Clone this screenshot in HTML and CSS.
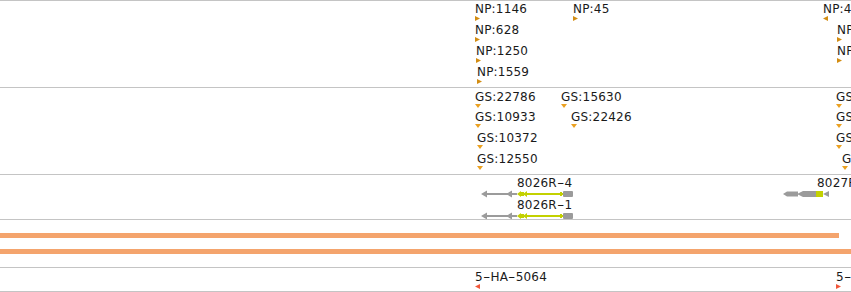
FILE: index.html
```html
<!DOCTYPE html>
<html lang="en">
<head>
    <meta charset="UTF-8">
    <title>Tracks</title>
    <link rel="stylesheet" href="styles.css">
</head>
<body>
    <!-- NP track -->
    <div class="track track-tall">
        <div class="feat np" style="left:475px;top:1px"><span class="label">NP:1146</span><i class="tri tri-right"></i></div>
        <div class="feat np" style="left:475px;top:22px"><span class="label">NP:628</span><i class="tri tri-right"></i></div>
        <div class="feat np" style="left:476px;top:43px"><span class="label">NP:1250</span><i class="tri tri-right"></i></div>
        <div class="feat np" style="left:477px;top:64px"><span class="label">NP:1559</span><i class="tri tri-right"></i></div>
        <div class="feat np" style="left:573px;top:1px"><span class="label">NP:45</span><i class="tri tri-right"></i></div>
        <div class="feat np" style="left:823px;top:1px"><span class="label">NP:47</span><i class="tri tri-left"></i></div>
        <div class="feat np" style="left:837px;top:22px"><span class="label">NP:88</span><i class="tri tri-right"></i></div>
        <div class="feat np" style="left:837px;top:43px"><span class="label">NP:91</span><i class="tri tri-right"></i></div>
    </div>

    <!-- GS track -->
    <div class="track track-tall">
        <div class="feat gs" style="left:475px;top:2px"><span class="label">GS:22786</span><i class="tri tri-down"></i></div>
        <div class="feat gs" style="left:475px;top:22px"><span class="label">GS:10933</span><i class="tri tri-down"></i></div>
        <div class="feat gs" style="left:477px;top:43px"><span class="label">GS:10372</span><i class="tri tri-down"></i></div>
        <div class="feat gs" style="left:477px;top:64px"><span class="label">GS:12550</span><i class="tri tri-down"></i></div>
        <div class="feat gs" style="left:561px;top:2px"><span class="label">GS:15630</span><i class="tri tri-down"></i></div>
        <div class="feat gs" style="left:571px;top:22px"><span class="label">GS:22426</span><i class="tri tri-down"></i></div>
        <div class="feat gs" style="left:836px;top:2px"><span class="label">GS:1</span><i class="tri tri-down"></i></div>
        <div class="feat gs" style="left:836px;top:22px"><span class="label">GS:2</span><i class="tri tri-down"></i></div>
        <div class="feat gs" style="left:836px;top:43px"><span class="label">GS:3</span><i class="tri tri-down"></i></div>
        <div class="feat gs" style="left:842px;top:64px"><span class="label">GS:4</span><i class="tri tri-down"></i></div>
    </div>

    <!-- gene models -->
    <div class="track track-genes">
        <div class="feat gene" style="left:481px;top:1px">
            <span class="label" style="margin-left:36px">8026R<span class="dash">-</span>4</span>
            <svg class="glyph" width="92" height="8" viewBox="0 0 92 8">
                <path d="M4 4H36" stroke="#9b9b9b" stroke-width="2"/>
                <path d="M0 4L6 0.5V7.5Z M25 4L31 0.5V7.5Z" fill="#9b9b9b"/>
                <path d="M46 4H82" stroke="#c3d100" stroke-width="2"/>
                <path d="M36 4L40 1V7Z M40 2H43V6H40Z M42 4L46 1V7Z M79 2H81V6H79Z" fill="#c3d100"/>
                <rect x="82" y="1" width="10" height="6" rx="1" fill="#9b9b9b"/>
            </svg>
        </div>
        <div class="feat gene" style="left:481px;top:23px">
            <span class="label" style="margin-left:36px">8026R<span class="dash">-</span>1</span>
            <svg class="glyph" width="92" height="8" viewBox="0 0 92 8">
                <path d="M4 4H36" stroke="#9b9b9b" stroke-width="2"/>
                <path d="M0 4L6 0.5V7.5Z M25 4L31 0.5V7.5Z" fill="#9b9b9b"/>
                <path d="M46 4H82" stroke="#c3d100" stroke-width="2"/>
                <path d="M36 4L40 1V7Z M40 2H43V6H40Z M42 4L46 1V7Z M79 2H81V6H79Z" fill="#c3d100"/>
                <rect x="82" y="1" width="10" height="6" rx="1" fill="#9b9b9b"/>
            </svg>
        </div>
        <div class="feat gene" style="left:783px;top:1px">
            <span class="label" style="margin-left:34px">8027R<span class="dash">-</span>2</span>
            <svg class="glyph" width="46" height="8" viewBox="0 0 46 8">
                <path d="M0 4L4 1.5H15V6.5H4Z M14 4L20 1V7Z M20 1H33V7H20Z" fill="#9b9b9b"/>
                <rect x="33" y="1" width="7" height="6" fill="#c3d100"/>
                <path d="M40 4L46 1V7Z" fill="#9b9b9b"/>
            </svg>
        </div>
    </div>

    <!-- coverage bars -->
    <div class="track track-cov">
        <div class="bar bar-short"></div>
        <div class="bar"></div>
    </div>

    <!-- HA track -->
    <div class="track track-last">
        <div class="feat ha" style="left:475px;top:2px"><span class="label">5<span class="dash">-</span>HA<span class="dash">-</span>5064</span><i class="tri tri-left"></i></div>
        <div class="feat ha" style="left:836px;top:2px"><span class="label">5<span class="dash">-</span>HA<span class="dash">-</span>5102</span><i class="tri tri-right"></i></div>
    </div>
</body>
</html>
```

FILE: styles.css
```css
/* page */
body {
    margin: 0;
    font-family: "DejaVu Sans", sans-serif;
    font-size: 12px;
    color: #1a1a1a;
    background-color: #fff;
    overflow: hidden;
}

/* tracks */
.track {
    position: relative;
    border-top: 1px solid #c4c4c4;
    overflow: hidden;
}

.track-tall {
    height: 86px;
}

.track-genes {
    height: 44px;
}

.track-cov {
    height: 34px;
    padding-top: 13px;
}

.track-last {
    height: 23px;
    border-bottom: 1px solid #c4c4c4;
}

/* features */
.feat {
    position: absolute;
    display: flex;
    flex-direction: column;
    align-items: flex-start;
}

.label {
    display: block;
    line-height: 14px;
    white-space: nowrap;
    letter-spacing: 0.2px;
}

/* dashes in names are drawn wider */
.dash {
    display: inline-block;
    width: 7.6px;
    text-align: center;
    transform: scaleX(1.7);
}

.tri {
    display: block;
    width: 5px;
    height: 5px;
}

.tri-right {
    clip-path: polygon(0 0, 100% 50%, 0 100%);
}

.tri-left {
    clip-path: polygon(100% 0, 0 50%, 100% 100%);
}

.tri-down {
    width: 6px;
    height: 4px;
    clip-path: polygon(0 0, 100% 0, 50% 100%);
}

.np .tri {
    background-color: #d38d12;
}

.gs .tri {
    background-color: #eba121;
}

.ha .tri {
    background-color: #f2573a;
}

.gene .glyph {
    display: block;
}

/* coverage */
.bar {
    height: 5px;
    background-color: #f4a46d;
}

.bar-short {
    width: 839px;
    margin-bottom: 11px;
}
```
